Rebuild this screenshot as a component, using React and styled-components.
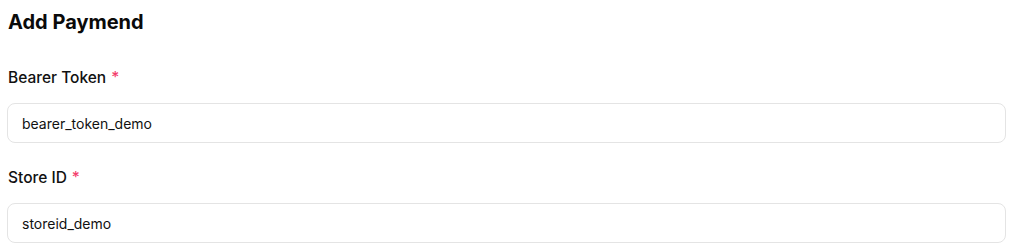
import React from "react";
import styled, { createGlobalStyle } from "styled-components";

const GlobalStyle = createGlobalStyle`
  body {
    margin: 0;
    background: #ffffff;
    font-family: Inter, "Noto Sans", sans-serif;
    color: #111111;
  }
`;

const Page = styled.div`
  padding: 8px 6px 0 7px;
  display: flex;
  flex-direction: column;
`;

const Title = styled.h2`
  margin: 0 0 0 1px;
  font-size: 20px;
  line-height: 28px;
  font-weight: 700;
  color: #0a0a0a;
`;

const Field = styled.div`
  display: flex;
  flex-direction: column;
  gap: 13px;
  margin-top: ${(p) => p.$top}px;
`;

const Label = styled.label`
  margin-left: 1px;
  font-size: 15.5px;
  line-height: 24px;
  font-weight: 500;
  color: #111111;
`;

const Star = styled.span`
  color: #f43f6e;
  margin-left: 5px;
`;

const Input = styled.input`
  box-sizing: border-box;
  width: 100%;
  height: 40px;
  border: 1px solid #e4e4e4;
  border-radius: 8px;
  padding: 0 14px;
  font-family: inherit;
  font-size: 14px;
  color: #111111;
  background: #ffffff;
  outline: none;
`;

const fields = [
  { label: "Bearer Token", value: "bearer_token_demo", top: 30 },
  { label: "Store ID", value: "storeid_demo", top: 23 },
];

export default function App() {
  return (
    <>
      <GlobalStyle />
      <Page>
        <Title>Add Paymend</Title>
        {fields.map((f) => (
          <Field key={f.label} $top={f.top}>
            <Label>
              {f.label}
              <Star>*</Star>
            </Label>
            <Input defaultValue={f.value} readOnly />
          </Field>
        ))}
      </Page>
    </>
  );
}
